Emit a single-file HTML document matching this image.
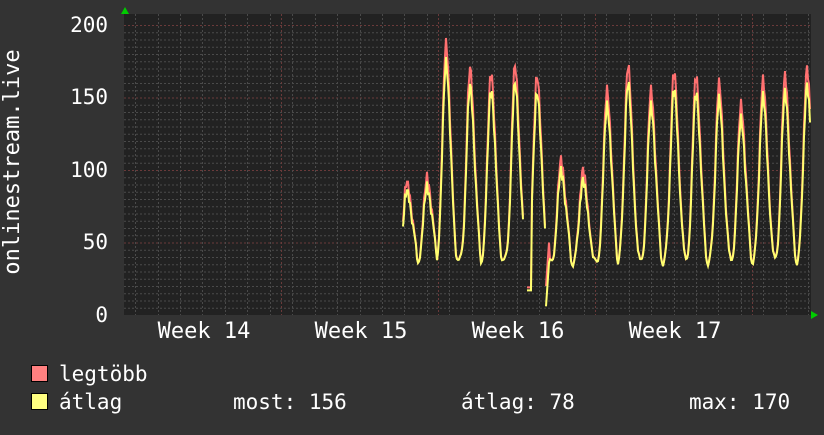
<!DOCTYPE html>
<html><head><meta charset="utf-8"><style>
html,body{margin:0;padding:0;background:#333;}
body{width:824px;height:430px;overflow:hidden;}
svg text{font-family:"DejaVu Sans Mono","Liberation Mono",monospace;font-size:20px;fill:#fff;}
</style></head><body>
<svg id="g" width="824" height="430" xmlns="http://www.w3.org/2000/svg">
<rect width="824" height="430" fill="#333"/>
<rect x="124" y="14" width="687" height="301" fill="#222"/>
<g id="grid"></g>
<g id="lines"></g>
<polygon points="121,14 129,14 125,7" fill="#0c0"/>
<polygon points="811,311 811,319 818,315" fill="#0c0"/>
<g style="font-size:21px">
<text x="108" y="32" text-anchor="end" style="font-size:21px">200</text>
<text x="108" y="104" text-anchor="end" style="font-size:21px">150</text>
<text x="108" y="177" text-anchor="end" style="font-size:21px">100</text>
<text x="108" y="249" text-anchor="end" style="font-size:21px">50</text>
<text x="108" y="322" text-anchor="end" style="font-size:21px">0</text>
</g>
<text x="204" y="338" text-anchor="middle" style="font-size:22px">Week 14</text>
<text x="361" y="338" text-anchor="middle" style="font-size:22px">Week 15</text>
<text x="518" y="338" text-anchor="middle" style="font-size:22px">Week 16</text>
<text x="675" y="338" text-anchor="middle" style="font-size:22px">Week 17</text>
<text transform="translate(19,162) rotate(-90)" text-anchor="middle" style="font-size:22px">onlinestream.live</text>
<rect x="31.5" y="365.5" width="16" height="16" fill="#ff8080" stroke="#000"/>
<rect x="31.5" y="393.5" width="16" height="16" fill="#ffff80" stroke="#000"/>
<text x="59" y="381" style="font-size:21px">legtöbb</text>
<text x="59" y="409" style="font-size:21px">átlag</text>
<text x="233" y="409" style="font-size:21px">most: 156</text>
<text x="461" y="409" style="font-size:21px">átlag: 78</text>
<text x="689" y="409" style="font-size:21px">max: 170</text>
</svg>
<script>
var NS="http://www.w3.org/2000/svg";
function el(p,t,a){var e=document.createElementNS(NS,t);for(var k in a)e.setAttribute(k,a[k]);p.appendChild(e);return e;}
var g=document.getElementById('grid');
function Y(v){return 315-v*1.45;}
for(var v=5;v<=200;v+=5){var maj=v%50==0;el(g,'line',{x1:124,x2:811,y1:Y(v)+0.5,y2:Y(v)+0.5,stroke:maj?'#6a3a3a':'#4a4a4a','stroke-dasharray':'2,2'});}
for(var x=124+22.4*0.5;x<811;x+=22.43){el(g,'line',{x1:Math.round(x)+0.5,x2:Math.round(x)+0.5,y1:14,y2:315,stroke:'#4a4a4a','stroke-dasharray':'2,2'});}
[281,438,595,752].forEach(function(x){el(g,'line',{x1:x+0.5,x2:x+0.5,y1:14,y2:315,stroke:'#6a3a3a','stroke-dasharray':'2,2'});});
var peaks=[[407,93],[427,95],[446,187],[470,170],[491,167],[515,172],[537,165],[561,107],[583,100],[607,155],[628,172],[651,155],[674,168],[696,165],[719,160],[741,145],[763,162],[785,165],[807,170]];
function val(x,scale){
 var best=null,d=1e9;for(var i=0;i<peaks.length;i++){var dd=Math.abs(x-peaks[i][0]);if(dd<d){d=dd;best=peaks[i];}}
 var dx=(x-best[0]);var w=dx<0?5:6;
 var f=Math.exp(-Math.pow(dx/w,2));
 var base=35+3*Math.sin(x*0.7);
 var p=best[1]*scale;
 var v=base+(p-base)*Math.max(f,0)+ (Math.abs(dx)<10?8*Math.exp(-Math.pow((dx-7)/3,2)):0);
 v+= 4*Math.sin(x*2.3)*f;
 return v;
}
var L=document.getElementById('lines');
function draw(scale,col){
 var segs=[[403,523],[527,545],[546,810]];
 segs.forEach(function(s){var pts=[];for(var x=s[0];x<=s[1];x++){var v=val(x,scale);
  if(x>=527&&x<=531)v=scale<1?17:19;
  if(x>=546&&x<=549)v=scale<1?6+(x-546)*10:20+(x-546)*10;
  if(x<=410)v=Math.min(v,scale<1?86:92);
  pts.push(x+','+Y(v).toFixed(1));}
  el(L,'polyline',{points:pts.join(' '),fill:'none',stroke:col,'stroke-width':2});});
}
draw(1,'#ff7070');
draw(0.93,'#ffff70');
</script>
</body></html>
